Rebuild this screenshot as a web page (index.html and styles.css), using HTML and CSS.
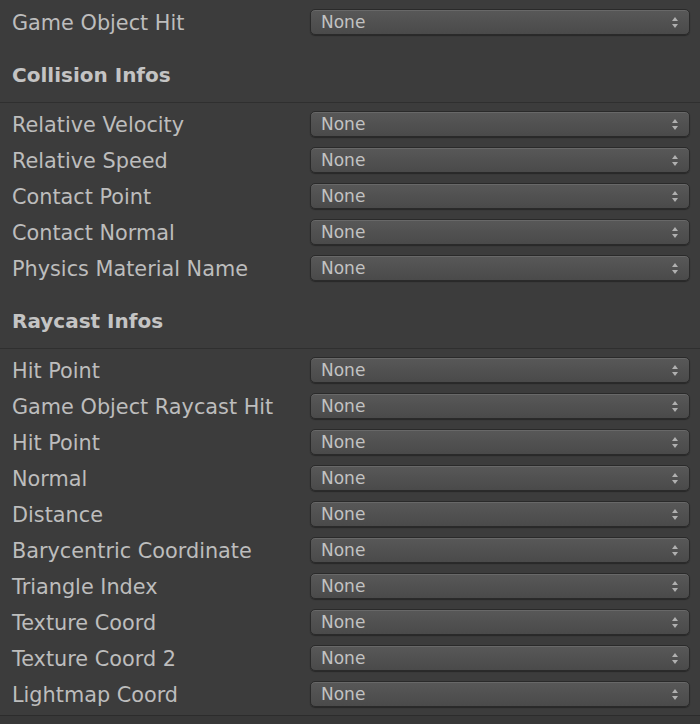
FILE: index.html
```html
<!DOCTYPE html>
<html>
<head>
<meta charset="utf-8">
<link rel="stylesheet" href="styles.css">
</head>
<body>
<div class="panel">
  <div class="row"><span class="label">Game Object Hit</span><div class="dd"><span>None</span><i class="arr"></i></div></div>
  <div class="section">
    <div class="head">Collision Infos</div>
    <div class="rows">
      <div class="row"><span class="label">Relative Velocity</span><div class="dd"><span>None</span><i class="arr"></i></div></div>
      <div class="row"><span class="label">Relative Speed</span><div class="dd"><span>None</span><i class="arr"></i></div></div>
      <div class="row"><span class="label">Contact Point</span><div class="dd"><span>None</span><i class="arr"></i></div></div>
      <div class="row"><span class="label">Contact Normal</span><div class="dd"><span>None</span><i class="arr"></i></div></div>
      <div class="row"><span class="label">Physics Material Name</span><div class="dd"><span>None</span><i class="arr"></i></div></div>
    </div>
  </div>
  <div class="section">
    <div class="head">Raycast Infos</div>
    <div class="rows">
      <div class="row"><span class="label">Hit Point</span><div class="dd"><span>None</span><i class="arr"></i></div></div>
      <div class="row"><span class="label">Game Object Raycast Hit</span><div class="dd"><span>None</span><i class="arr"></i></div></div>
      <div class="row"><span class="label">Hit Point</span><div class="dd"><span>None</span><i class="arr"></i></div></div>
      <div class="row"><span class="label">Normal</span><div class="dd"><span>None</span><i class="arr"></i></div></div>
      <div class="row"><span class="label">Distance</span><div class="dd"><span>None</span><i class="arr"></i></div></div>
      <div class="row"><span class="label">Barycentric Coordinate</span><div class="dd"><span>None</span><i class="arr"></i></div></div>
      <div class="row"><span class="label">Triangle Index</span><div class="dd"><span>None</span><i class="arr"></i></div></div>
      <div class="row"><span class="label">Texture Coord</span><div class="dd"><span>None</span><i class="arr"></i></div></div>
      <div class="row"><span class="label">Texture Coord 2</span><div class="dd"><span>None</span><i class="arr"></i></div></div>
      <div class="row"><span class="label">Lightmap Coord</span><div class="dd"><span>None</span><i class="arr"></i></div></div>
    </div>
  </div>
</div>
<div class="footer"></div>
</body>
</html>
```

FILE: styles.css
```css
html, body {
  margin: 0;
  padding: 0;
  background: #383838;
}
body {
  width: 700px;
  height: 724px;
  overflow: hidden;
  font-family: "DejaVu Sans", sans-serif;
}
.panel {
  background: #3c3c3c;
  padding-top: 4px;
  padding-bottom: 3px;
  border-bottom: 1px solid #2c2c2c;
}
.row {
  display: flex;
  align-items: center;
  height: 36px;
  padding: 0 10px 0 12px;
}
.label {
  width: 298px;
  flex: none;
  padding-top: 2px;
  color: #bdbdbd;
  font-size: 20.8px;
  white-space: nowrap;
}
.dd {
  flex: 1;
  height: 24px;
  display: flex;
  align-items: center;
  justify-content: space-between;
  padding: 0 10px;
  border: 1px solid #2a2a2a;
  border-radius: 5px;
  background: linear-gradient(#585858, #4a4a4a);
  box-shadow: inset 0 1px 0 #686868, 0 1px 1px rgba(0,0,0,0.35);
  color: #c2c2c2;
  font-size: 17px;
}
.arr {
  width: 7px;
  height: 13px;
  position: relative;
}
.arr::before, .arr::after {
  content: "";
  position: absolute;
  left: 0;
  border-left: 3.5px solid transparent;
  border-right: 3.5px solid transparent;
}
.arr::before {
  top: 1px;
  border-bottom: 4px solid #b0b0b0;
}
.arr::after {
  bottom: 1px;
  border-top: 4px solid #b0b0b0;
}
.head {
  height: 63px;
  box-sizing: border-box;
  display: flex;
  align-items: center;
  padding: 8px 0 0 12px;
  color: #c4c4c4;
  font-size: 20px;
  font-weight: bold;
  border-bottom: 1px solid #2f2f2f;
}
.rows {
  padding-top: 3px;
}
```
